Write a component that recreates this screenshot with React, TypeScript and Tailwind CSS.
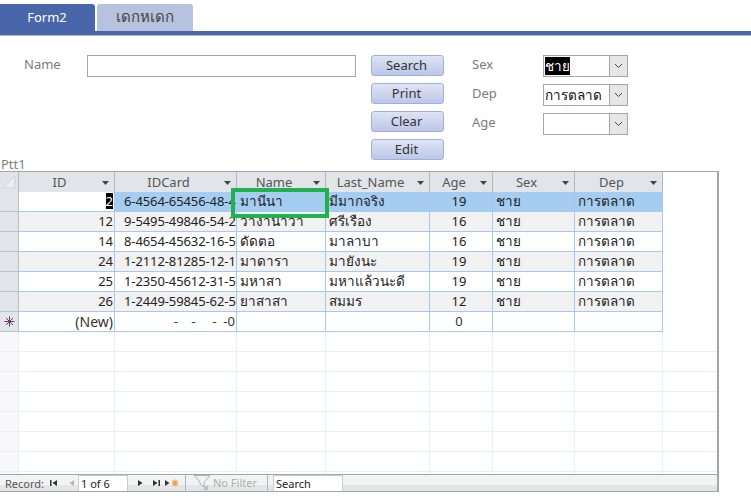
const F = "font-['Noto_Sans','Open_Sans','DejaVu_Sans',sans-serif]";

const cols = [
  { n: "ID", w: "w-[96px]" },
  { n: "IDCard", w: "w-[122px]" },
  { n: "Name", w: "w-[89px]" },
  { n: "Last_Name", w: "w-[104px]" },
  { n: "Age", w: "w-[63px]" },
  { n: "Sex", w: "w-[82px]" },
  { n: "Dep", w: "w-[88px]" },
];

const rows = [
  ["2", "6-4564-65456-48-4", "มานีนา", "มีมากจริง", "19", "ชาย", "การตลาด"],
  ["12", "9-5495-49846-54-2", "วางานาวา", "ศรีเรือง", "16", "ชาย", "การตลาด"],
  ["14", "8-4654-45632-16-5", "ดัดตอ", "มาลาบา", "16", "ชาย", "การตลาด"],
  ["24", "1-2112-81285-12-1", "มาดารา", "มายังนะ", "19", "ชาย", "การตลาด"],
  ["25", "1-2350-45612-31-5", "มหาสา", "มหาแล้วนะดี", "19", "ชาย", "การตลาด"],
  ["26", "1-2449-59845-62-5", "ยาสาสา", "สมมร", "12", "ชาย", "การตลาด"],
];

function Chevron() {
  return (
    <svg width="9" height="6" viewBox="0 0 9 6" fill="none" stroke="#444" strokeWidth="1">
      <path d="M1 1 L4.5 4.5 L8 1" />
    </svg>
  );
}

function Combo({ value, selected }: { value: string; selected?: boolean }) {
  return (
    <div className="flex h-[22px] w-[85px] border border-[#a6a6a6] bg-white">
      <div className="flex-1 flex items-center pl-[1px] text-[13.5px] leading-[20px] text-[#111] overflow-hidden">
        {selected ? <span className="bg-black text-white leading-[18px]">{value}</span> : value}
      </div>
      <div className="w-[18px] shrink-0 border-l border-[#a6a6a6] bg-[#e6e6e6] flex items-center justify-center">
        <Chevron />
      </div>
    </div>
  );
}

function Btn({ t }: { t: string }) {
  return (
    <button className="h-[21px] w-[73px] rounded-[3px] border border-[#9fb0dc] bg-gradient-to-b from-[#dfe4f4] to-[#bcc7e8] pb-[2px] pr-[2px] text-[13px] leading-[16px] text-[#333] text-center">
      {t}
    </button>
  );
}

function Tri({ d, c = "#333" }: { d: string; c?: string }) {
  return (
    <svg width="10" height="10" viewBox="0 0 10 10" className="shrink-0">
      <path d={d} fill={c} />
    </svg>
  );
}

export default function App() {
  return (
    <div className={`${F} relative w-[751px] h-[502px] bg-white overflow-hidden`}>
      {/* Tabs */}
      <div className="h-[36px] pt-[4px] flex flex-col">
        <div className="flex gap-[2px] h-[27px]">
          <div className="w-[95px] rounded-tr-[3px] bg-[#4a66aa] pr-[1px] text-white text-[13px] flex items-center justify-center">Form2</div>
          <div className="w-[96px] rounded-t-[3px] bg-[#b7c2de] text-[#444] text-[15px] flex items-center justify-center pb-[2px]">เดกหเดก</div>
        </div>
        <div className="h-[5px] bg-[#4a66aa] border-b border-[#b5b5b5]" />
      </div>

      {/* Form */}
      <div className="h-[125px] pt-[19px] pl-[24px] flex items-start">
        <div className="w-[63px] text-[13px] leading-[18px] text-[#7a7a7a]">Name</div>
        <div className="w-[269px] h-[22px] border border-[#a6a6a6] bg-white" />
        <div className="ml-[15px] w-[101px] flex flex-col gap-[7px]">
          <Btn t="Search" />
          <Btn t="Print" />
          <Btn t="Clear" />
          <Btn t="Edit" />
        </div>
        <div className="w-[71px] flex flex-col text-[13px] text-[#7a7a7a] leading-[18px] gap-[11px]">
          <div>Sex</div>
          <div>Dep</div>
          <div>Age</div>
        </div>
        <div className="flex flex-col gap-[7px]">
          <Combo value="ชาย" selected />
          <Combo value="การตลาด" />
          <Combo value="" />
        </div>
      </div>

      {/* Ptt1 */}
      <div className="h-[10px] pl-[1px] text-[13px] leading-[6px] text-[#7f7f7f]">Ptt1</div>

      {/* Datasheet */}
      <div className="w-[719px] h-[321px] border-t border-r-2 border-b border-[#a6a6a6] flex flex-col text-[13px]">
        <div className="flex-1 overflow-hidden">
          {/* Header */}
          <div className="flex h-[20px]">
            <div className="w-[19px] bg-[#e1e4e9] border-r border-[#b5b5b5] flex items-end justify-end pr-[2px] pb-[3px]">
              <svg width="14" height="14" viewBox="0 0 14 14"><path d="M13 1 L1 13 H13 Z" fill="#eceef1" stroke="#cfd3d9" /></svg>
            </div>
            {cols.map((c) => (
              <div key={c.n} className={`${c.w} relative shrink-0 bg-[#e1e4e9] border-r border-[#b5b5b5] pr-[14px] text-center text-[#555] leading-[20px]`}>
                {c.n}
                <svg width="7" height="4" viewBox="0 0 7 4" className="absolute right-[5px] top-[9px]"><path d="M0 0 H7 L3.5 4 Z" fill="#444" /></svg>
              </div>
            ))}
          </div>
          {/* Data rows */}
          {rows.map((r, i) => (
            <div key={r[0]} className="flex h-[20px]">
              <div className="w-[19px] shrink-0 bg-[#e1e4e9] border-r border-b border-[#b5c0cc]" />
              {r.map((v, j) => {
                const selected = i === 0;
                const bg = selected ? (j === 0 ? "bg-white" : "bg-[#a5cdf1]") : i % 2 === 1 ? "bg-[#f2f2f2]" : "bg-white";
                const align = j === 0 ? "text-right pr-[1px]" : j === 4 ? "text-center pr-[4px]" : "text-left pl-[3px]";
                const pad = j === 1 ? "pl-[9px] tracking-[-0.1px]" : j === 5 || j === 6 ? "pl-[3px]" : "";
                const size = j === 2 || j === 3 || j === 5 || j === 6 ? "text-[13.5px]" : "text-[13px]";
                return (
                  <div key={j} className={`${cols[j].w} ${bg} ${align} ${pad} ${size} shrink-0 border-r border-b border-[#a9c8f0] leading-[19px] text-[#222] whitespace-nowrap overflow-hidden`}>
                    {selected && j === 0 ? <span className="bg-black text-white inline-block leading-[16px]">{v}</span> : v}
                  </div>
                );
              })}
            </div>
          ))}
          {/* New row */}
          <div className="flex h-[20px]">
            <div className="w-[19px] shrink-0 bg-[#e1e4e9] border-r border-b border-[#b5c0cc] flex items-center justify-center">
              <svg width="11" height="11" viewBox="0 0 11 11" stroke="#6a3a6a" strokeWidth="1"><path d="M5.5 0.5 V10.5 M0.5 5.5 H10.5 M2 2 L9 9 M9 2 L2 9" /></svg>
            </div>
            {cols.map((c, j) => (
              <div key={c.n} className={`${c.w} shrink-0 border-r border-b border-[#a9c8f0] leading-[19px] text-[#333] overflow-hidden whitespace-pre ${j === 0 ? "text-right pr-[1px] text-[14px]" : j === 1 ? "text-right pr-[1px]" : j === 4 ? "text-center pr-[4px]" : ""}`}>
                {j === 0 ? "(New)" : j === 1 ? "-    -     -  -0" : j === 4 ? "0" : ""}
              </div>
            ))}
          </div>
          {/* Empty rows */}
          {Array.from({ length: 8 }).map((_, i) => (
            <div key={i} className="flex h-[20px]">
              <div className="w-[19px] shrink-0 bg-[#f8f8fa] border-r border-b border-[#e8eff9]" />
              {cols.map((c) => (
                <div key={c.n} className={`${c.w} shrink-0 border-r border-b border-[#e8eff9]`} />
              ))}
              <div className="flex-1 border-b border-[#e8eff9]" />
            </div>
          ))}
        </div>

        {/* Nav bar */}
        <div className="h-[17px] shrink-0 border-t border-[#a6a6a6] bg-gradient-to-b from-[#f2f3f5] from-60% to-[#e4e5e8] to-60% flex items-center text-[11px] text-[#555] pl-[5px]">
          <span className="w-[44px] leading-[15px]">Record:</span>
          <Tri d="M1 2 H2.5 V8 H1 Z M8 2 V8 L3.5 5 Z" />
          <span className="w-[8px]" />
          <Tri d="M7 2 V8 L2.5 5 Z" c="#b0b8b0" />
          <div className="ml-[1px] w-[50px] h-[16px] border-x border-t border-[#c3d0c8] bg-white text-[#222] pl-[2px] leading-[15px]">1 of 6</div>
          <span className="w-[7px]" />
          <Tri d="M3 2 V8 L7.5 5 Z" />
          <span className="w-[6px]" />
          <Tri d="M2 2 V8 L6.5 5 Z M7.5 2 H9 V8 H7.5 Z" />
          <span className="w-[2px]" />
          <Tri d="M2 2 V8 L6.5 5 Z" />
          <svg width="8" height="8" viewBox="0 0 8 8" stroke="#f0a040" strokeWidth="1.2" className="-ml-[2px]"><path d="M4 0.5 V7.5 M0.5 4 H7.5 M1.5 1.5 L6.5 6.5 M6.5 1.5 L1.5 6.5" /></svg>
          <div className="ml-[6px] h-[16px] border-l border-[#b5b5b5]" />
          <svg width="18" height="16" viewBox="0 0 18 16" fill="none" stroke="#b0b0b0" className="ml-[7px]">
            <path d="M1 0.5 H17 L11 7 V12 L7 9 V7 Z" />
            <path d="M11 11 L15 15 M15 11 L11 15" strokeWidth="1.3" />
          </svg>
          <span className="ml-[2px] w-[52px] text-[#aeaeae]">No Filter</span>
          <div className="ml-[2px] h-[16px] border-l border-[#b5b5b5]" />
          <div className="ml-[5px] w-[70px] h-[16px] border-x border-t border-[#c3d0c8] bg-white text-[#222] pl-[2px] leading-[15px]">Search</div>
        </div>
      </div>

      {/* Green highlight */}
      <div className="absolute left-[231px] top-[188px] w-[98px] h-[30px] border-[4px] border-[#22b14c]" />
    </div>
  );
}
